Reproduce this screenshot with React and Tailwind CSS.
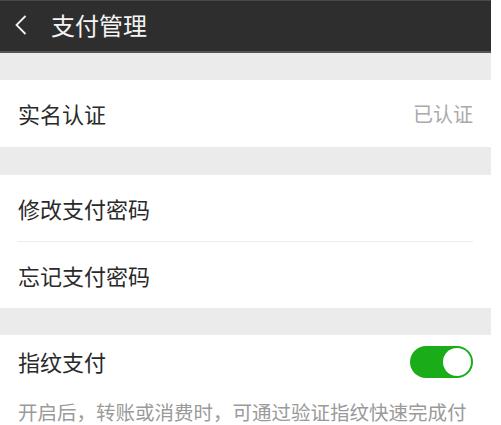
export default function App() {
  return (
    <div
      className="w-[491px] h-[425px] overflow-hidden bg-white"
      style={{ fontFamily: '"Noto Sans CJK SC", "Noto Sans", sans-serif' }}
    >
      <div className="h-[53px] bg-[#2e2e2e] border-t border-[#4a4a4a] border-b-2 border-b-[#555] flex items-center text-white">
        <svg width="16" height="24" viewBox="0 0 16 24" className="ml-[13px] -mt-[2px]">
          <path d="M12.5 3 L3.5 12 L12.5 21" fill="none" stroke="#f2f2f2" strokeWidth="1.8" />
        </svg>
        <div className="ml-[22px] -mt-[2px] text-[24px] leading-none text-[#f4f4f4]">支付管理</div>
      </div>

      <div className="h-[27px] bg-[#ebebeb]" />

      <div className="h-[67px] flex items-center justify-between pl-[18px] pr-[18px]">
        <span className="text-[22px] text-[#2a2a2a]">实名认证</span>
        <span className="text-[20px] text-[#aaa]">已认证</span>
      </div>

      <div className="h-[28px] bg-[#ebebeb]" />

      <div className="h-[66px] flex items-center pl-[18px] text-[22px] text-[#2a2a2a]">修改支付密码</div>
      <div className="ml-[17px] mr-[18px] h-px bg-[#ececec]" />
      <div className="h-[66px] flex items-center pl-[18px] text-[22px] text-[#2a2a2a]">忘记支付密码</div>

      <div className="h-[27px] bg-[#ebebeb]" />

      <div className="h-[53px] flex items-center justify-between pl-[18px] pr-[18px]">
        <span className="text-[22px] text-[#2a2a2a]">指纹支付</span>
        <div className="w-[63px] h-[32px] rounded-full bg-[#1aad19] flex items-center justify-end pr-[2px]">
          <div className="w-[28px] h-[28px] rounded-full bg-white" />
        </div>
      </div>
      <div className="pl-[18px] pt-[11px] text-[19.5px] leading-[26px] text-[#9a9a9a] whitespace-nowrap">
        开启后，转账或消费时，可通过验证指纹快速完成付
      </div>
      <div className="h-px bg-[#bdbdbd]" />
    </div>
  );
}
